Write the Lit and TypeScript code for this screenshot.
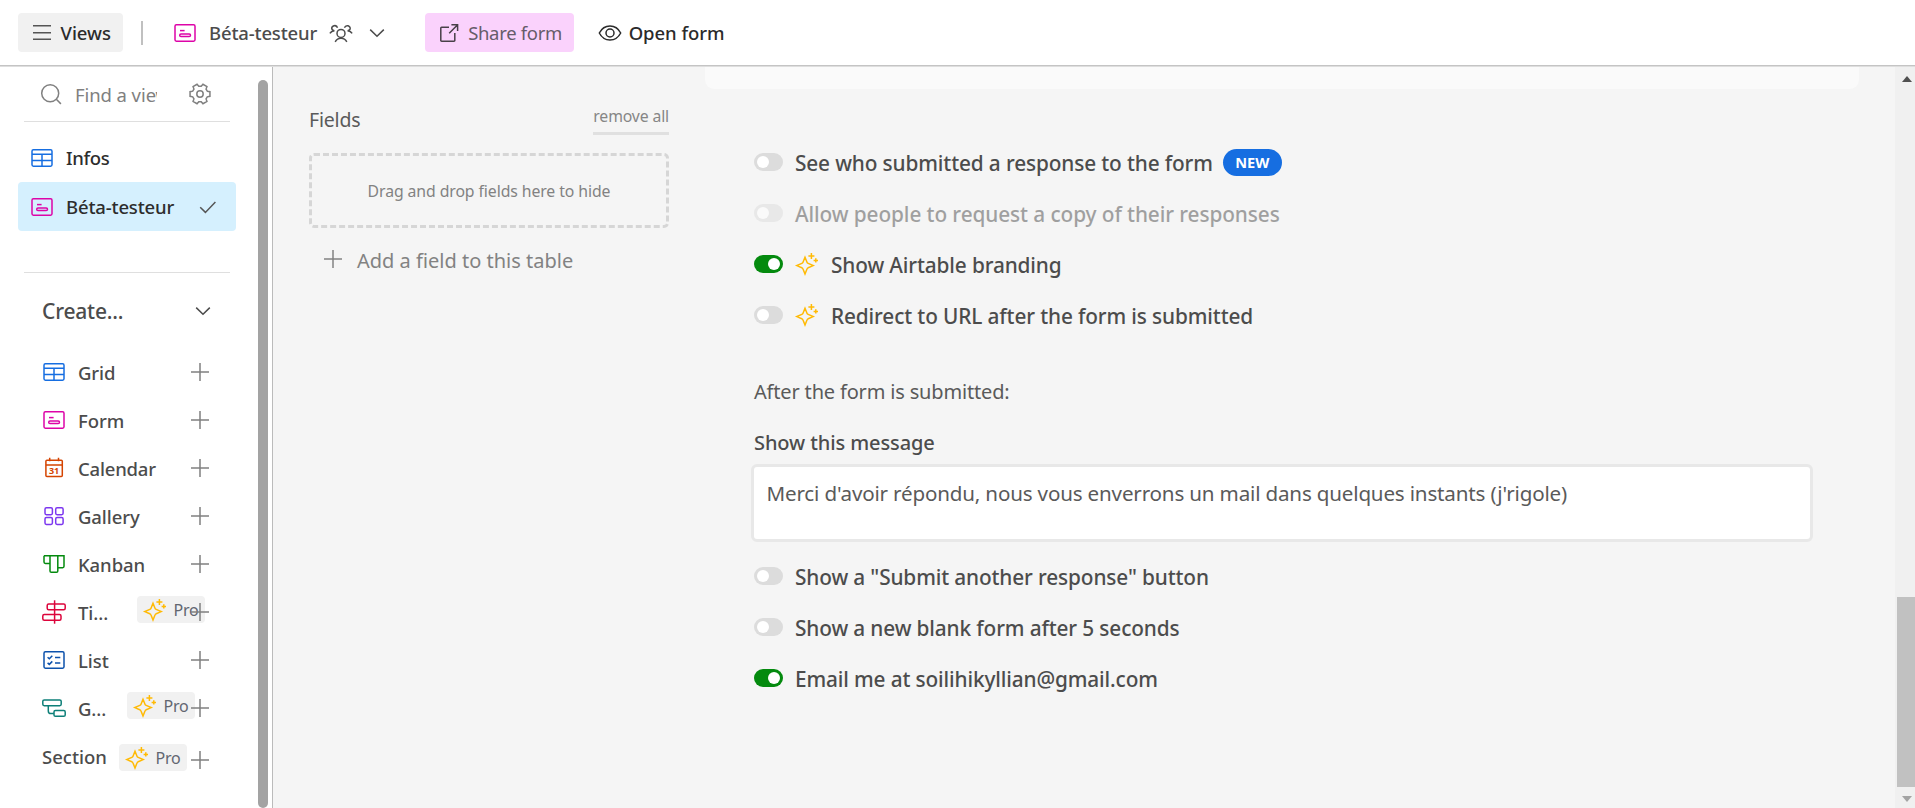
import { LitElement, html, svg, css, nothing, TemplateResult } from 'lit';
import { customElement, property } from 'lit/decorators.js';
import { classMap } from 'lit/directives/class-map.js';

const GEAR = (() => {
  const pts: string[] = [];
  for (let i = 0; i < 6; i++) {
    const tooth = i * 60;
    for (const [offset, r] of [[-21, 7.8], [-13, 10.2], [13, 10.2], [21, 7.8]]) {
      const a = ((tooth + offset) * Math.PI) / 180;
      pts.push(`${(12 + r * Math.cos(a)).toFixed(2)} ${(12 + r * Math.sin(a)).toFixed(2)}`);
    }
  }
  return `M${pts.join('L')}Z`;
})();

const ICONS: Record<string, TemplateResult> = {
  menu: svg`<path d="M3 4.8h18M3 11.8h18M3 18.2h18"/>`,
  form: svg`<rect x="2" y="3.75" width="20" height="16.5" rx="1.4"/><path d="M7 9.6h4.6"/><rect x="6.7" y="12.9" width="10.8" height="2.6" rx="1.3"/>`,
  grid: svg`<rect x="2" y="3.75" width="20" height="16.5" rx="1.4"/><path d="M2 8.3h20M2 14.4h20M12 8.3v12"/>`,
  calendar: svg`<rect x="3.9" y="4.3" width="16.4" height="16.2" rx="1"/><path d="M3.9 8.9h16.4M7.7 1.8v3.4M16.5 1.8v3.4"/><text x="12.1" y="17.9">31</text>`,
  gallery: svg`<rect x="3" y="3.75" width="7.4" height="6.9" rx="1.4"/><rect x="13.7" y="3.75" width="7.4" height="6.9" rx="1.4"/><rect x="3" y="13.6" width="7.4" height="6.9" rx="1.4"/><rect x="13.7" y="13.6" width="7.4" height="6.9" rx="1.4"/>`,
  kanban: svg`<path d="M2 3.75H22v10.6a1.3 1.3 0 0 1-1.3 1.3H16M2 3.75v6.3a1.4 1.4 0 0 0 1.4 1.4H8M8 3.75v15.2a1.3 1.3 0 0 0 1.3 1.3h5.2a1.3 1.3 0 0 0 1.3-1.3V3.75"/>`,
  timeline: svg`<path d="M12.6 .3v23.4"/><rect x="5.2" y="3.9" width="18" height="5.8" rx="1.5"/><rect x=".8" y="14.5" width="18.2" height="5.8" rx="1.5"/>`,
  list: svg`<rect x="2" y="3.75" width="20" height="16.5" rx="1.4"/><path d="M5.6 9.3l1.7 1.5 3-3M5.6 14.9l1.7 1.5 3-3M13 9.5h5.3M13 15h5.3"/>`,
  gantt: svg`<rect x=".8" y="3.9" width="18.4" height="5.8" rx="1.4"/><path d="M6.3 9.7v5.2a2.6 2.6 0 0 0 2.6 2.6h3"/><rect x="12" y="14.6" width="11.2" height="5.7" rx="1.4"/>`,
  sparkle: svg`<path d="M10 5.2l2 5a2 2 0 0 0 1.2 1.2l5 2.2-5 2.2a2 2 0 0 0-1.2 1.2l-2 5-2-5a2 2 0 0 0-1.2-1.2l-5-2.2 5-2.2a2 2 0 0 0 1.2-1.2z"/><path d="M16.4 1v6M13.4 4h6M20.8 6.2v4.4M18.6 8.4h4.4"/>`,
  plus: svg`<path d="M12 3v18M3 12h18"/>`,
  chevron: svg`<path d="M5.2 8.6l6.8 6.7 6.8-6.7"/>`,
  check: svg`<path d="M4.2 12.2l5.2 5.2L19.4 7"/>`,
  search: svg`<circle cx="11.2" cy="11.2" r="8.5"/><path d="M17.3 17.3l4.6 4.6"/>`,
  gear: svg`<path d="${GEAR}"/><circle cx="12" cy="12" r="3.2"/>`,
  people: svg`<circle cx="12" cy="12.4" r="4"/><path d="M6.2 20.8a6.6 6.6 0 0 1 11.6 0M.9 12.4c.9-1.6 2.6-2.6 4.6-2.7M2.9 8.4a2.9 2.9 0 1 1 5.6-1.6M23.1 12.4c-.9-1.6-2.6-2.6-4.6-2.7M21.1 8.4a2.9 2.9 0 1 0-5.6-1.6M5.5 9.7a3 3 0 0 1-2.6-1.5M18.5 9.7a3 3 0 0 0 2.6-1.5"/>`,
  share: svg`<path d="M12 6.2H4.6a.8.8 0 0 0-.8.8v12.4a.8.8 0 0 0 .8.8H17a.8.8 0 0 0 .8-.8V12M14.4 3.8h6.2V10M20.4 4l-8.2 8.2"/>`,
  eye: svg`<path d="M1.3 12C3.6 7.6 7.3 5 12 5s8.4 2.6 10.7 7c-2.3 4.4-6 7-10.7 7S3.6 16.4 1.3 12z"/><circle cx="12" cy="12" r="4"/>`,
};

@customElement('ui-icon')
export class UiIcon extends LitElement {
  @property() name = '';
  static styles = css`
    :host { display: block; flex: none; width: 24px; height: 24px; }
    svg { display: block; overflow: visible; fill: none; stroke: currentColor; stroke-width: 1.5; }
    text { fill: currentColor; stroke: none; font: 700 9px "Open Sans", sans-serif; text-anchor: middle; }
  `;
  render() {
    return html`<svg width="24" height="24" viewBox="0 0 24 24">${ICONS[this.name]}</svg>`;
  }
}

@customElement('ui-toggle')
export class UiToggle extends LitElement {
  @property({ type: Boolean }) on = false;
  static styles = css`
    :host { display: block; flex: none; }
    .track { box-sizing: border-box; display: flex; width: 29px; height: 18px; padding: 3px; border-radius: 9px; background: #dcdcdc; }
    .track.on { justify-content: flex-end; background: #048a0e; }
    .knob { width: 12px; height: 12px; border-radius: 50%; background: #fff; }
  `;
  render() {
    return html`<div class=${classMap({ track: true, on: this.on })}><div class="knob"></div></div>`;
  }
}

@customElement('pro-badge')
export class ProBadge extends LitElement {
  static styles = css`
    :host { display: flex; box-sizing: border-box; flex: none; align-items: center; width: 68px; height: 27px; padding-left: 6px; border-radius: 4px; background: #f1f1f1; color: #616670; font-size: 16px; letter-spacing: -0.2px; }
    ui-icon { color: #ffba05; margin-right: 6.5px; }
    span { line-height: 27px; padding-top: 1px; }
  `;
  render() {
    return html`<ui-icon name="sparkle"></ui-icon><span>Pro</span>`;
  }
}

interface CreateItem { icon: string; label: string; fit?: string; pro?: boolean }
const CREATE: CreateItem[] = [
  { icon: 'grid', label: 'Grid' },
  { icon: 'form', label: 'Form' },
  { icon: 'calendar', label: 'Calendar', fit: 'snug' },
  { icon: 'gallery', label: 'Gallery' },
  { icon: 'kanban', label: 'Kanban' },
  { icon: 'timeline', label: 'Ti...', pro: true },
  { icon: 'list', label: 'List' },
  { icon: 'gantt', label: 'G...', pro: true },
];

interface Option { label: string; on?: boolean; disabled?: boolean; isNew?: boolean; pro?: boolean }
const ACCESS: Option[] = [
  { label: 'See who submitted a response to the form', isNew: true },
  { label: 'Allow people to request a copy of their responses', disabled: true },
  { label: 'Show Airtable branding', on: true, pro: true },
  { label: 'Redirect to URL after the form is submitted', pro: true },
];
const AFTER: Option[] = [
  { label: 'Show a "Submit another response" button' },
  { label: 'Show a new blank form after 5 seconds' },
  { label: 'Email me at soilihikyllian@gmail.com', on: true },
];

@customElement('app-root')
export class AppRoot extends LitElement {
  static styles = css`
    :host { display: flex; flex-direction: column; height: 808px; overflow: hidden; background: #fff; color: #4c4c4c; font-family: "Noto Sans", "Open Sans", sans-serif; font-size: 18.5px; white-space: nowrap; }
    * { box-sizing: border-box; }

    .bar { display: flex; align-items: center; flex: none; height: 67px; padding: 0 18px 1px; border-bottom: 1px solid #dedede; box-shadow: inset 0 -1px #c4c4c4; }
    .btn { display: flex; align-items: center; height: 39px; border-radius: 4px; font-weight: 500; }
    .views { width: 105px; padding-left: 12px; gap: 6.5px; background: #f1f1f1; color: #2b2b2b; }
    .views ui-icon { color: #555; }
    .rule { width: 2px; height: 24px; margin: 0 30px 0 18px; background: #c0c0c0; }
    .current { gap: 12px; letter-spacing: -0.17px; }
    .share { width: 149px; margin-left: 36px; padding-left: 12px; gap: 7px; background: #fad2fc; font-weight: 400; letter-spacing: -0.3px; color: #665c69; }
    .share ui-icon { color: #484048; }
    .open { margin-left: 24px; gap: 6.5px; color: #2b2b2b; letter-spacing: -0.05px; }

    .body { display: flex; flex: 1; min-height: 0; }
    .side { display: flex; flex: none; width: 273px; border-right: 1px solid #bbb; }
    .nav { width: 258px; padding-left: 18px; }
    .thumb { width: 10px; margin-top: 13px; border-radius: 5px; background: #a3a3a3; }
    .find { display: flex; align-items: center; width: 206px; height: 55px; margin-left: 6px; padding-left: 15px; border-bottom: 1px solid #dfdfdf; color: #808080; }
    .find .query { width: 82px; margin: 0 31px 0 12px; overflow: hidden; letter-spacing: -0.08px; }
    .view { display: flex; align-items: center; width: 218px; height: 49px; padding-left: 12px; border-radius: 4px; font-weight: 500; color: #2d2d2d; }
    .view.first { margin-top: 11px; }
    .view.active { background: #d5f0fe; }
    .view span { width: 134px; padding: 0 0 0 12px; letter-spacing: -0.17px; }
    .view.first span { letter-spacing: -0.35px; }
    .view.active ui-icon { margin-top: 1px; }
    .check { margin-left: 8px; color: #555; }
    .create { display: flex; align-items: center; width: 206px; height: 76px; margin: 41px 0 0 6px; padding-left: 18px; border-top: 1px solid #dfdfdf; font-size: 21px; font-weight: 500; letter-spacing: -0.2px; }
    .create span { flex: 1; }
    .create ui-icon { margin-right: 15px; }
    .item { display: flex; align-items: center; width: 194px; height: 48px; padding-left: 24px; font-weight: 500; }
    .item .label { flex: 1; padding: 1px 0 0 12px; letter-spacing: -0.08px; }
    .item .snug { letter-spacing: -0.2px; }
    .plus { color: #808080; }
    .item pro-badge { margin: 0 -17px 5px 0; font-weight: 400; }
    .item .gantt-pro { margin-right: -7px; }
    .section { margin-top: 4px; }
    .item.section .label { padding: 0 0 7px; letter-spacing: 0; }
    .section pro-badge { margin-right: 1px; }
    .c-grid { color: #166ee1; } .c-form { color: #dd04a8; } .c-calendar { color: #d54401; } .c-gallery { color: #7c37ef; }
    .c-kanban { color: #048a0e; } .c-timeline { color: #dc043b; } .c-list { color: #0d52ac; } .c-gantt { color: #0d7f78; }

    .stage { display: flex; flex: 1; min-width: 0; background: #f5f5f5; }
    .fields { width: 432px; padding: 29px 36px 0; }
    .head { display: flex; justify-content: space-between; height: 57px; }
    .title { font-size: 19.5px; letter-spacing: -0.2px; line-height: 48px; color: #5a5a5a; }
    .remove { height: 39px; border-bottom: 3px solid #e0e0e0; font-size: 15.8px; letter-spacing: -0.15px; line-height: 41px; color: #868686; }
    .drop { display: flex; align-items: center; justify-content: center; height: 75px; border: 3px dashed #d6d6d6; border-radius: 5px; padding-top: 1px; font-size: 15.8px; letter-spacing: -0.09px; color: #828282; }
    .add { display: flex; align-items: center; gap: 12px; height: 62px; padding-left: 12px; font-size: 20px; color: #828282; }
    .add span { padding-top: 3px; }

    .form { flex: 1; }
    .card { width: 1154px; height: 22px; border-radius: 0 0 9px 9px; background: #fafafa; }
    .settings { width: 1062px; margin: 48px 0 0 46px; }
    .opts { display: flex; flex-direction: column; gap: 1px; padding-left: 3px; }
    .opt { display: flex; align-items: center; height: 50px; font-size: 20.8px; font-weight: 500; letter-spacing: -0.13px; }
    .opt .label { padding: 2px 0 0 12px; }
    .opt.disabled { opacity: 0.5; }
    .opt.disabled .label { letter-spacing: -0.09px; }
    .spark { margin: 0 0 0 12px; color: #ffba05; }
    .new { width: 59px; height: 27px; margin: 1px 0 0 10px; border-radius: 13.5px; background: #166ee1; color: #fff; font: 700 14.6px/27px "Open Sans", sans-serif; letter-spacing: 0.1px; text-align: center; }
    .after { margin: 39px 0 0 3px; font-size: 20px; line-height: 26px; letter-spacing: -0.17px; color: #5a5a5a; }
    .msg { margin: 25px 0 0 3px; font-size: 20px; font-weight: 500; line-height: 26px; letter-spacing: -0.1px; }
    .box { height: 78px; margin: 8px 0 9px; padding: 10px 12.5px; border: 3px solid #e8e8e8; border-radius: 6px; background: #fff; font-size: 20.6px; letter-spacing: -0.175px; line-height: 32px; color: #5a5a5a; }

    .scroll { display: flex; flex-direction: column; align-items: flex-end; width: 20px; background: #f0f0f0; }
    .arrow { width: 10px; height: 6px; margin-right: 3px; }
    .up { margin-top: 9px; background: #505050; clip-path: polygon(50% 0, 100% 100%, 0 100%); }
    .down { margin-top: 9px; background: #a3a3a3; clip-path: polygon(0 0, 100% 0, 50% 100%); }
    .grip { width: 18px; height: 190px; margin-top: 515px; background: #c1c1c1; }
  `;

  private option(o: Option) {
    return html`<div class=${classMap({ opt: true, disabled: !!o.disabled })}>
      <ui-toggle ?on=${o.on}></ui-toggle>
      ${o.pro ? html`<ui-icon class="spark" name="sparkle"></ui-icon>` : nothing}
      <span class="label">${o.label}</span>
      ${o.isNew ? html`<span class="new">NEW</span>` : nothing}
    </div>`;
  }

  private createItem(i: CreateItem) {
    return html`<div class="item">
      <ui-icon class="c-${i.icon}" name=${i.icon}></ui-icon>
      <span class="label ${i.fit ?? ''}">${i.label}</span>
      ${i.pro ? html`<pro-badge class="${i.icon}-pro"></pro-badge>` : nothing}
      <ui-icon class="plus" name="plus"></ui-icon>
    </div>`;
  }

  render() {
    return html`
      <header class="bar">
        <div class="btn views"><ui-icon name="menu"></ui-icon><span>Views</span></div>
        <div class="rule"></div>
        <div class="btn current">
          <ui-icon class="c-form" name="form"></ui-icon><span>Béta-testeur</span>
          <ui-icon name="people"></ui-icon><ui-icon name="chevron"></ui-icon>
        </div>
        <div class="btn share"><ui-icon name="share"></ui-icon><span>Share form</span></div>
        <div class="btn open"><ui-icon name="eye"></ui-icon><span>Open form</span></div>
      </header>
      <div class="body">
        <aside class="side">
          <div class="nav">
            <div class="find"><ui-icon name="search"></ui-icon><span class="query">Find a view</span><ui-icon name="gear"></ui-icon></div>
            <div class="view first"><ui-icon class="c-grid" name="grid"></ui-icon><span>Infos</span></div>
            <div class="view active"><ui-icon class="c-form" name="form"></ui-icon><span>Béta-testeur</span><ui-icon class="check" name="check"></ui-icon></div>
            <div class="create"><span>Create...</span><ui-icon name="chevron"></ui-icon></div>
            ${CREATE.map((i) => this.createItem(i))}
            <div class="item section"><span class="label">Section</span><pro-badge></pro-badge><ui-icon class="plus" name="plus"></ui-icon></div>
          </div>
          <div class="thumb"></div>
        </aside>
        <main class="stage">
          <section class="fields">
            <div class="head"><span class="title">Fields</span><span class="remove">remove all</span></div>
            <div class="drop">Drag and drop fields here to hide</div>
            <div class="add"><ui-icon name="plus"></ui-icon><span>Add a field to this table</span></div>
          </section>
          <section class="form">
            <div class="card"></div>
            <div class="settings">
              <div class="opts">${ACCESS.map((o) => this.option(o))}</div>
              <div class="after">After the form is submitted:</div>
              <div class="msg">Show this message</div>
              <div class="box">Merci d'avoir répondu, nous vous enverrons un mail dans quelques instants (j'rigole)</div>
              <div class="opts">${AFTER.map((o) => this.option(o))}</div>
            </div>
          </section>
          <div class="scroll"><div class="arrow up"></div><div class="grip"></div><div class="arrow down"></div></div>
        </main>
      </div>
    `;
  }
}
